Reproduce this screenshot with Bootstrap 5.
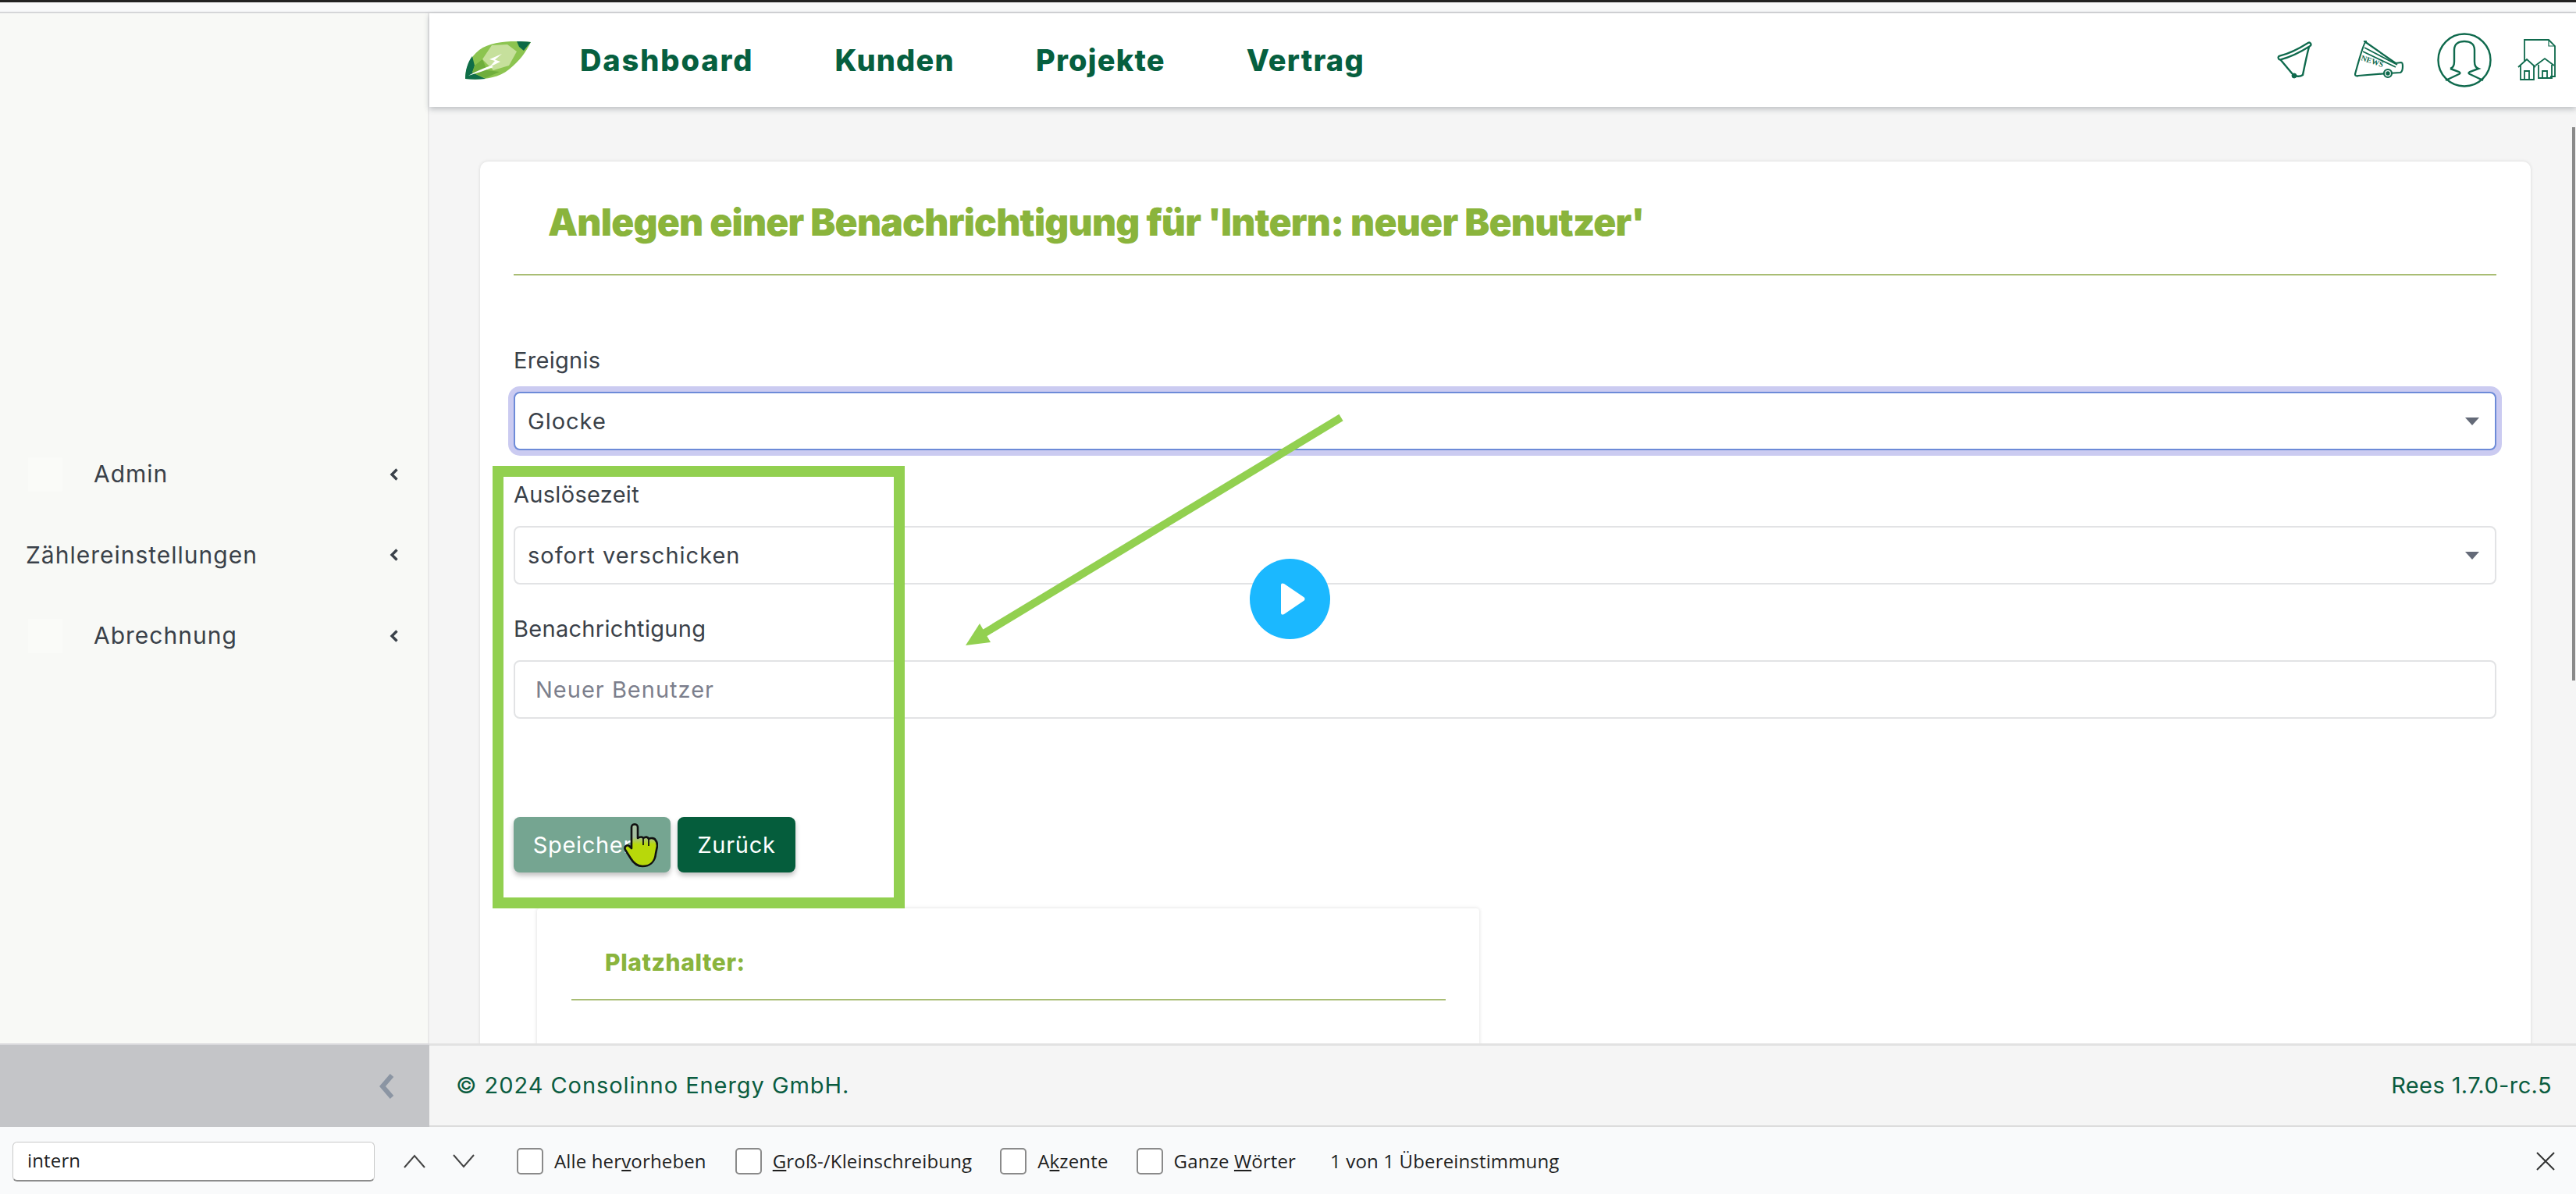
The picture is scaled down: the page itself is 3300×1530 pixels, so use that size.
<!DOCTYPE html>
<html lang="de">
  <head>
    <meta charset="UTF-8" />
    <meta name="viewport" content="width=device-width, initial-scale=1.0" />
    <title>Benachrichtigung anlegen</title>
    <link
      href="https://cdn.jsdelivr.net/npm/bootstrap@5.3.3/dist/css/bootstrap.min.css"
      rel="stylesheet"
    />
    <style>
      html, body { height: 100%; }
      body {
        font-family: Inter, "Liberation Sans", sans-serif;
        font-size: 30px;
        color: #3a4149;
        background: #f5f5f5;
        overflow: hidden;
      }
      .app-shell { height: 1530px; }

      /* browser strip above the page */
      .top-strip {
        height: 17px;
        flex: none;
        background: #f8f9fa;
        border-top: 3px solid #222;
        border-bottom: 2px solid #d5d6d8;
      }
      .app-middle { flex: 1 1 auto; min-height: 0; }

      /* sidebar */
      .side-col {
        width: 550px;
        flex: none;
        background: #f8f9f6;
        border-right: 2px solid #e9e9e9;
        padding-top: 539px;
      }
      .side-item {
        height: 103.5px;
        padding-left: 33px;
        padding-right: 37px;
        letter-spacing: 1px;
      }
      .side-icon {
        width: 44px;
        height: 44px;
        margin-left: 3px;
        margin-right: 40px;
        background: #fafbf8;
      }
      .side-caret { width: 12px; height: 18px; }

      /* header */
      .top-bar {
        height: 120px;
        flex: none;
        background: #fff;
        box-shadow: 0 3px 7px rgba(60, 70, 80, .3);
        padding-left: 46px;
        padding-right: 25px;
        z-index: 2;
      }
      .brand-leaf { width: 84px; height: 50px; margin-right: 63px; }
      .top-link {
        font-size: 38px;
        font-weight: 800;
        color: #065f3f;
        text-decoration: none;
        letter-spacing: 1.2px;
      }
      .top-link:first-child { letter-spacing: 1.9px; }
      .top-links { gap: 104px; }

      /* page content */
      .page-body {
        flex: 1 1 auto;
        overflow: hidden;
        padding: 70px 58px 0 65px;
        min-height: 0;
      }
      .form-panel {
        background: #fff;
        border: 0;
        border-radius: 10px;
        box-shadow: 0 0 4px rgba(0, 0, 0, .12);
        padding: 0 44px 0 43px;
        height: 1300px;
      }
      .panel-head {
        height: 146px;
        padding-left: 44px;
        border-bottom: 2px solid #a9bd74;
        font-size: 48px;
        font-weight: 900;
        line-height: 156px;
        color: #8ab43c;
        letter-spacing: -.8px;
        margin: 0;
      }
      .field-title {
        display: block;
        line-height: 40px;
        margin-bottom: 20px;
        font-size: 29px;
        letter-spacing: .3px;
        color: #3a4149;
      }
      .field-box.form-select,
      .field-box.form-control {
        height: 75px;
        font-size: 29px;
        letter-spacing: 1px;
        border: 2px solid #e2e3e5;
        border-radius: 8px;
        color: #3a4149;
        margin-bottom: 37px;
        padding: 0 60px 0 16px;
        box-shadow: none;
      }
      .field-box.form-control { padding-left: 26px; }
      .field-box.form-select {
        background-image: url("data:image/svg+xml,%3csvg xmlns='http://www.w3.org/2000/svg' viewBox='0 0 18 10'%3e%3cpath fill='%23646a78' d='M0 0h18l-9 10z'/%3e%3c/svg%3e");
        background-size: 18px 10px;
        background-position: right 20px center;
      }
      .field-box::placeholder { color: #7c7f8d; opacity: 1; }
      .field-focus.form-select {
        border-color: #6d8bd8;
        box-shadow: 0 0 0 7px #cbcbf1;
      }
      .action-row { margin-top: 126px; gap: 9px; }
      .act-btn {
        height: 71px;
        font-size: 29px;
        letter-spacing: .7px;
        border: 0;
        border-radius: 8px;
        color: #fff;
        padding: 0;
        box-shadow: 0 4px 6px rgba(0, 0, 0, .25);
      }
      .act-save { width: 201px; background: #75a591; padding-right: 6px; }
      .act-back { width: 151px; background: #055d3c; }
      .hint-panel {
        width: 1207px;
        margin-left: 30px;
        margin-top: 46px;
        height: 300px;
        border: 0;
        border-radius: 4px;
        box-shadow: 0 0 5px rgba(0, 0, 0, .14);
        padding: 0 43px 0 44px;
      }
      .hint-head {
        height: 118px;
        line-height: 139px;
        padding-left: 43px;
        border-bottom: 2px solid #a9bd74;
        color: #8ab43c;
        font-size: 30px;
        font-weight: 800;
        letter-spacing: .6px;
      }

      /* annotations drawn on the video */
      .note-box {
        position: absolute;
        left: 631px;
        top: 597px;
        width: 528px;
        height: 567px;
        border: 14px solid #92d050;
        pointer-events: none;
        z-index: 3;
      }
      .note-arrow {
        position: absolute;
        left: 1225px;
        top: 525px;
        z-index: 3;
      }
      .play-dot {
        position: absolute;
        left: 1601px;
        top: 716px;
        width: 103px;
        height: 103px;
        z-index: 3;
      }
      .hand-cursor {
        position: absolute;
        left: 799px;
        top: 1055px;
        width: 44px;
        height: 57px;
        z-index: 4;
      }

      /* footer row */
      .foot-row { height: 107px; flex: none; }
      .foot-toggle {
        width: 550px;
        flex: none;
        background: #c4c5c8;
        border-top: 2px solid #d9d9dc;
        padding-right: 44px;
      }
      .foot-main {
        background: #f5f5f5;
        border-top: 3px solid #e2e2e2;
        border-bottom: 2px solid #dcdcdc;
        padding: 0 31px 0 34px;
        font-size: 29px;
        letter-spacing: .95px;
        color: #0a5c40;
      }
      .foot-version { letter-spacing: .4px; }

      /* browser find bar */
      .find-bar {
        height: 86px;
        flex: none;
        background: #f9fafb;
        font-family: "Open Sans", "Liberation Sans", sans-serif;
        font-size: 24px;
        letter-spacing: .15px;
        color: #1f1f1f;
        padding: 2px 26px 0 16px;
      }
      .find-input {
        width: 464px;
        height: 51px;
        background: #fff;
        border: 1px solid #c9c9c9;
        border-bottom: 2px solid #8c8c8c;
        border-radius: 6px;
        font-size: 24px;
        padding: 0 18px;
        line-height: 46px;
        margin-right: 36px;
      }
      .find-arrow { width: 30px; height: 18px; }
      .find-check {
        width: 34px;
        height: 34px;
        background: #fff;
        border: 2px solid #8a8a8a;
        border-radius: 5px;
        margin-right: 14px;
      }
    </style>
  </head>
  <body>
    <div class="app-shell d-flex flex-column position-relative">
      <div class="top-strip"></div>

      <div class="app-middle d-flex">
        <!-- Sidebar -->
        <aside class="side-col">
          <div class="side-item d-flex align-items-center justify-content-between">
            <div class="d-flex align-items-center"><span class="side-icon"></span><span>Admin</span></div>
            <svg class="side-caret" viewBox="0 0 12 18"><path d="M9.5 2.5 3 9l6.5 6.5" fill="none" stroke="#3a4149" stroke-width="3.4"/></svg>
          </div>
          <div class="side-item d-flex align-items-center justify-content-between">
            <span>Zählereinstellungen</span>
            <svg class="side-caret" viewBox="0 0 12 18"><path d="M9.5 2.5 3 9l6.5 6.5" fill="none" stroke="#3a4149" stroke-width="3.4"/></svg>
          </div>
          <div class="side-item d-flex align-items-center justify-content-between">
            <div class="d-flex align-items-center"><span class="side-icon"></span><span>Abrechnung</span></div>
            <svg class="side-caret" viewBox="0 0 12 18"><path d="M9.5 2.5 3 9l6.5 6.5" fill="none" stroke="#3a4149" stroke-width="3.4"/></svg>
          </div>
        </aside>

        <div class="d-flex flex-column flex-grow-1" style="min-width: 0">
          <!-- Header -->
          <header class="top-bar d-flex align-items-center justify-content-between">
            <div class="d-flex align-items-center">
              <svg class="brand-leaf" viewBox="0 0 84 50">
                <path d="M84 2C64 0 34 0 18 12 6 21 0 36 0 49c18 1 40 1 56-12C70 26 78 14 84 2Z" fill="#8cc450"/>
                <path d="M84 2C78 1 72 1 66 1l3 7 6 5c3-4 6-8 9-11Z" fill="#0d6b45"/>
                <path d="M0 49c0-11 3-21 9-29l3 12-3 9 17 8C17 50 8 50 0 49Z" fill="#0f6e48"/>
                <path d="M34 6 54 5 66 14 56 32 36 38 22 24Z" fill="#c6e09c"/>
                <path d="M12 32 22 24 28 38 44 40 26 48 9 41Z" fill="#6fae3c"/>
                <path d="M47 17 31 24l7 2-7 8 14-7-7-2.5Z" fill="#fff"/>
                <path d="M33 32C22 36 12 40 4 45c10-3 22-7 32-11Z" fill="#fff"/>
              </svg>
              <nav class="top-links d-flex">
                <a class="top-link" href="#">Dashboard</a>
                <a class="top-link" href="#">Kunden</a>
                <a class="top-link" href="#">Projekte</a>
                <a class="top-link" href="#">Vertrag</a>
              </nav>
            </div>
            <div class="d-flex align-items-center">
              <!-- bell -->
              <svg width="46" height="50" viewBox="0 0 46 50" style="margin-right: 53px" fill="none" stroke="#0f6a4d" stroke-linejoin="round" stroke-linecap="round">
                <path d="M4 24 20 43c3 3 9 4 13 1 2-10 5-25 8-36" stroke-width="2.4"/>
                <path d="M4 22C16 19 30 12 41 5" stroke-width="7"/>
                <path d="M4 22C16 19 30 12 41 5" stroke="#fff" stroke-width="2.6"/>
                <circle cx="22" cy="45" r="3" fill="#0f6a4d"/>
              </svg>
              <!-- news megaphone -->
              <svg width="64" height="50" viewBox="0 0 64 50" style="margin-right: 42px" fill="none" stroke="#0f6a4d" stroke-width="2.2" stroke-linejoin="round">
                <path d="M15 1C12 2 4 32 1 43c0 2 2 3 4 2l38-3 16-1c2-1 3-4 3-8 0-2 0-5-2-5l-7 1-40-28Z"/>
                <path d="M13 9l42 22M11 14l42 20" stroke-width="1.8"/>
                <circle cx="43" cy="42" r="5" fill="#fff"/>
                <circle cx="43" cy="42" r="1.6" fill="#0f6a4d"/>
                <text x="8" y="25" transform="rotate(18 8 25)" font-family="Liberation Serif, serif" font-size="10" font-weight="700" fill="#0f6a4d" stroke="none">NEWS</text>
              </svg>
              <!-- user -->
              <svg width="70" height="70" viewBox="0 0 70 70" style="margin-right: 33px" fill="none" stroke="#0f6a4d" stroke-width="2.4">
                <circle cx="35" cy="35" r="33.5"/>
                <path d="M17 46c3-1 5-3 5-9V22C22 14 28 11 35 11s13 3 13 11v15c0 6 2 8 5 9l-11 4c-2 1-2 2 0 3l17 8M17 46l11 4c2 1 2 2 0 3l-17 8"/>
              </svg>
              <!-- houses on a sheet -->
              <svg width="50" height="54" viewBox="0 0 50 54" fill="none" stroke="#0f6a4d" stroke-width="1.8">
                <path d="M9 29V1h31l8 8v39H42"/>
                <path d="M40 1v8h8" stroke-width="1.2"/>
                <path d="M1 36 12 26l11 10M4 33v19h17V33M9 52V41h6v11"/>
                <path d="M23 34 35 25l12 9M27 33v17h17V33M32 50v-9h6v9"/>
              </svg>
            </div>
          </header>

          <!-- Content -->
          <main class="page-body">
            <div class="form-panel card">
              <h1 class="panel-head">Anlegen einer Benachrichtigung für 'Intern: neuer Benutzer'</h1>
              <form style="margin-top: 89px">
                <label class="field-title">Ereignis</label>
                <select class="field-box field-focus form-select"><option>Glocke</option></select>
                <label class="field-title">Auslösezeit</label>
                <select class="field-box form-select"><option>sofort verschicken</option></select>
                <label class="field-title">Benachrichtigung</label>
                <input class="field-box form-control" type="text" placeholder="Neuer Benutzer" />
                <div class="action-row d-flex">
                  <button type="button" class="btn act-btn act-save">Speichern</button>
                  <button type="button" class="btn act-btn act-back">Zurück</button>
                </div>
              </form>
              <div class="hint-panel card">
                <div class="hint-head">Platzhalter:</div>
              </div>
            </div>
          </main>
        </div>
      </div>

      <!-- Footer -->
      <div class="foot-row d-flex">
        <div class="foot-toggle d-flex align-items-center justify-content-end">
          <svg width="20" height="32" viewBox="0 0 20 32"><path d="M16 2 4 16l12 14" fill="none" stroke="#8b95a3" stroke-width="6"/></svg>
        </div>
        <div class="foot-main flex-grow-1 d-flex align-items-center justify-content-between">
          <span>© 2024 Consolinno Energy GmbH.</span>
          <span class="foot-version">Rees 1.7.0-rc.5</span>
        </div>
      </div>

      <!-- Find bar -->
      <div class="find-bar d-flex align-items-center">
        <div class="find-input">intern</div>
        <svg class="find-arrow" style="margin-right: 33px" viewBox="0 0 30 18"><path d="M2 17 15 2l13 15" fill="none" stroke="#444" stroke-width="2"/></svg>
        <svg class="find-arrow" style="margin-right: 53px" viewBox="0 0 30 18"><path d="M2 1l13 15L28 1" fill="none" stroke="#444" stroke-width="2"/></svg>
        <span class="find-check"></span><span style="margin-right: 37px">Alle her<u>v</u>orheben</span>
        <span class="find-check"></span><span style="margin-right: 36px"><u>G</u>roß-/Kleinschreibung</span>
        <span class="find-check"></span><span style="margin-right: 36px">A<u>k</u>zente</span>
        <span class="find-check"></span><span style="margin-right: 44px">Ganze <u>W</u>örter</span>
        <span>1 von 1 Übereinstimmung</span>
        <svg class="ms-auto" width="26" height="26" viewBox="0 0 26 26"><path d="M2 2l22 22M24 2 2 24" fill="none" stroke="#333" stroke-width="2"/></svg>
      </div>

      <!-- Scrollbar thumb from the recording -->
      <div class="position-absolute" style="left: 3295px; top: 163px; width: 4px; height: 709px; background: #8a8a8a"></div>

      <!-- Annotations over the form -->
      <div class="note-box"></div>
      <svg class="note-arrow" width="510" height="320" viewBox="0 0 510 320">
        <path d="M493 10 30 290" stroke="#92d050" stroke-width="10" fill="none"/>
        <path d="M12 302 44 298 30 274Z" fill="#92d050"/>
      </svg>
      <svg class="play-dot" viewBox="0 0 103 103">
        <circle cx="51.5" cy="51.5" r="51.5" fill="#1bb8ff"/>
        <path d="M40 34c0-3 2-3 4-2l25 17c2 1 2 4 0 5L44 71c-2 1-4 1-4-2Z" fill="#fff"/>
      </svg>
      <svg class="hand-cursor" viewBox="0 0 44 57">
        <defs>
          <linearGradient id="handFill" x1="0" y1="0" x2="0" y2="1">
            <stop offset="0.3" stop-color="#a5bfa0" />
            <stop offset="0.48" stop-color="#b8d80a" />
          </linearGradient>
        </defs>
        <path d="M10 5c0-5 8-5 8 0v14c3-2 6-2 7 0 3-2 6-2 7 1 3-2 8-1 9 2 2 2 2 4 2 7l-2 10c-1 11-8 16-17 16-8 0-12-5-15-10L2 34c-2-4 2-7 5-5l3 3Z" fill="url(#handFill)" stroke="#111" stroke-width="2.6" stroke-linejoin="round"/>
        <path d="M25 19v9M32 20v9" stroke="#111" stroke-width="1.8" fill="none"/>
      </svg>
    </div>
  </body>
</html>
